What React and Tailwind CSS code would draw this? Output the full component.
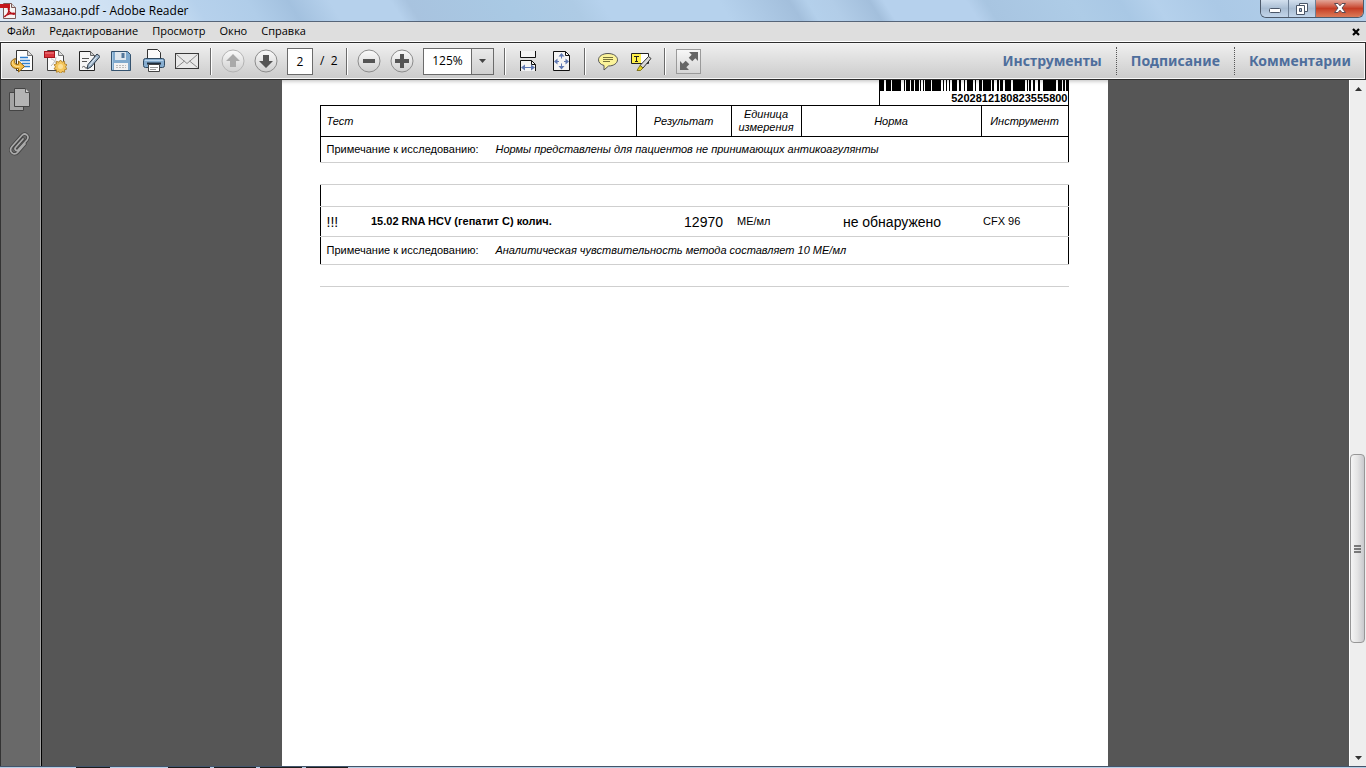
import React, { useState } from 'react';

const menuItems = ['Файл', 'Редактирование', 'Просмотр', 'Окно', 'Справка'];
const panels = ['Инструменты', 'Подписание', 'Комментарии'];

// [x, width] of every black bar
const bars = [
    [0, 4], [6, 5], [12, 9], [24, 1], [26, 4], [31, 3], [35, 4], [40, 1], [43, 1], [45, 6], [52, 9], [63, 1],
    [66, 1], [69, 1], [72, 5], [79, 2], [84, 1], [87, 6], [95, 1], [99, 3], [103, 8], [112, 2], [117, 2],
    [120, 3], [125, 6], [133, 12], [147, 1], [149, 2], [153, 2], [158, 2], [163, 13], [178, 4], [183, 2], [186, 3],
];

const PdfLogo = () => (
    <svg width="16" height="16" viewBox="0 0 16 16" aria-hidden="true">
        <path d="M3.5.5h8l4 4v11h-12z" fill="#f6f3f2" stroke="#7d5a58" />
        <path d="M11.500.500v4h4" fill="#ddd" stroke="#7d5a58" />
        <path d="M0 1h10v4H0z" fill="#c4161c" />
        <path d="M5 13.500c2-1.500 4-5 4.200-7.500 0-1-1-1-.9 0 .3 3 3 5.200 5.700 5.200 1 0 .8-1-.2-1-3 0-6 1-8 2.300-1 .7-1.500 1.300-.8 1z" fill="none" stroke="#b5121b" strokeWidth="1.400" />
    </svg>
);

const OpenIcon = () => (
    <svg width="24" height="24" viewBox="0 0 24 24" aria-hidden="true">
        <path d="M6.500 1.500h11l5 5v15h-16z" fill="#fdfdfd" stroke="#333" />
        <path d="M17.500 1.500v5h5" fill="#d8d8d8" stroke="#777" />
        <path d="M10 8.500h8M10 11.500h10M12 14.500h8M14 17.500h6" stroke="#2f7fd0" strokeWidth="1.500" />
        <path d="M5.500 9.500C2 10.500.500 13 1 15.500c.6 3 4 4.500 7.500 4V23l6-5.500-6-5.500v3.300c-2.200.3-3.600-.4-3.800-1.800-.2-1.300.3-2.700.8-4z" fill="#f5bf4a" stroke="#8f5f0c" />
        <path d="M2.500 12.500c-.5 3 2 5.500 7 5" fill="none" stroke="#fde3a2" />
    </svg>
);

const CreatePdfIcon = () => (
    <svg width="24" height="24" viewBox="0 0 24 24" aria-hidden="true">
        <path d="M4.500 1.500h11l5 5v15h-16z" fill="#fafafa" stroke="#444" />
        <path d="M15.500 1.500v5h5" fill="#ddd" stroke="#777" />
        <path d="M8 10c2 0 5 3 6 6M13 8c0 3-2 6-5 9" fill="none" stroke="#bbb" />
        <rect x="1.500" y="2.500" width="10" height="6" fill="#d9363e" stroke="#a3151d" />
        <path d="M2 4h9" stroke="#f08a8e" />
        <path d="M17.500 11l1.600 2.100 2.500-.8v2.600l2.400.8-1.500 2.100 1.500 2.100-2.400.8v2.500l-2.500-.7-1.600 2.100-1.600-2.100-2.500.7v-2.500l-2.400-.8 1.500-2.100-1.500-2.100 2.400-.8v-2.600l2.500.8z" fill="#f5c65c" stroke="#a8761c" strokeWidth=".8" />
        <circle cx="17.500" cy="17.500" r="2.500" fill="#fbe09b" />
    </svg>
);

const SignIcon = () => (
    <svg width="24" height="24" viewBox="0 0 24 24" aria-hidden="true">
        <path d="M3.500 2.500h11l4 4v15h-15z" fill="#f6f6f6" stroke="#222" />
        <path d="M14.500 2.500v4h4" fill="#ccc" stroke="#666" />
        <path d="M6 9.500h7M6 12.500h5M6 18.500c2-2 3-1 3 0s2 0 4-.5" fill="none" stroke="#555" />
        <path d="M21 5l3 2.500-9 10.500-4 2 1-4.500z" fill="#9fb6cc" stroke="#2c3a48" />
        <path d="M20.500 8l-7 8.500" stroke="#e9f1f8" />
    </svg>
);

const SaveIcon = () => (
    <svg width="24" height="24" viewBox="0 0 24 24" aria-hidden="true">
        <path d="M2.500 2.500h16l3 3v16h-19z" fill="#7fa9cd" stroke="#35536f" />
        <path d="M6 3h11v8H6z" fill="#dfe7ee" />
        <path d="M12.500 4h3v5h-3z" fill="#54779a" />
        <path d="M5 14h14v7H5z" fill="#f2f2f2" />
        <path d="M7 16.500h10M7 18.500h10" stroke="#bbb" strokeDasharray="2 1" />
        <path d="M3.500 3.500v17" stroke="#a9cbe6" />
    </svg>
);

const PrintIcon = () => (
    <svg width="24" height="24" viewBox="0 0 24 24" aria-hidden="true">
        <path d="M5.500 10V.500h10l3 3V10z" fill="#fafafa" stroke="#333" />
        <rect x="1.500" y="9.500" width="21" height="9" rx="2" fill="#86add0" stroke="#2f4961" />
        <path d="M3 11.500h18" stroke="#b8d3ea" />
        <path d="M5 14.500h14" stroke="#1d2d3d" strokeWidth="2" />
        <path d="M6.500 15.500h11v7h-11z" fill="#fff" stroke="#444" />
        <path d="M8 18.500h8M8 20.500h6" stroke="#999" />
    </svg>
);

const MailIcon = () => (
    <svg width="24" height="24" viewBox="0 0 24 24" aria-hidden="true">
        <rect x=".5" y="4.500" width="23" height="15" fill="#e9e9e9" stroke="#3a3a3a" />
        <path d="M1.500 5.500L12 14.500l10.500-9M1.500 18.500l8-6.500M22.500 18.500l-8-6.500" fill="none" stroke="#8a8a8a" />
    </svg>
);

const CircleIcon = ({ children, dim }) => (
    <svg width="24" height="24" viewBox="0 0 24 24" aria-hidden="true">
        <defs>
            <linearGradient id="disc" x1="0" y1="0" x2="0" y2="1">
                <stop offset="0" stopColor="#fbfbfb" />
                <stop offset="1" stopColor="#cfcfcf" />
            </linearGradient>
        </defs>
        <circle cx="12" cy="12" r="11" fill="url(#disc)" stroke={dim ? '#b4b4b4' : '#8c8c8c'} />
        <g fill={dim ? '#a9a9a9' : '#555'}>{children}</g>
    </svg>
);

const FitWidthIcon = () => (
    <svg width="24" height="24" viewBox="0 0 24 24" aria-hidden="true">
        <path d="M4.500 2v6.500h15V2" fill="#f4f4f4" stroke="#111" />
        <path d="M4.500 22V11.500h11l4 4V22" fill="#f4f4f4" stroke="#111" />
        <path d="M15.500 11.500v4h4" fill="none" stroke="#111" />
        <path d="M6 18.500h12" stroke="#6079b3" />
        <path d="M9 15.500v6l-4-3zM15 15.500v6l4-3z" fill="#6079b3" />
    </svg>
);

const FitPageIcon = () => (
    <svg width="24" height="24" viewBox="0 0 24 24" aria-hidden="true">
        <path d="M4.500 2.500h12l4 4v15h-16z" fill="#f4f4f4" stroke="#111" />
        <path d="M16.500 2.500v4h4" fill="none" stroke="#111" />
        <path d="M12.500 5v4.500M12.500 14.500V19M6 12.500h4M15 12.500h4" stroke="#6079b3" />
        <path d="M9.500 7.500h6l-3-3.500zM9.500 17h6l-3 3.500zM8.500 9.500v6L5 12.500zM16.500 9.500v6l3.500-3z" fill="#6079b3" />
    </svg>
);

const CommentIcon = () => (
    <svg width="24" height="24" viewBox="0 0 24 24" aria-hidden="true">
        <path d="M12 4.500c5.500 0 9.500 2.800 9.500 6.300S17.500 17 12.500 17L8 21v-4.500c-3.500-1-5.500-3-5.500-5.700 0-3.500 4-6.300 9.500-6.300z" fill="#fbf39a" stroke="#555" />
        <path d="M7 8.500h10M7 10.500h10M7 12.500h7" stroke="#77733d" />
    </svg>
);

const HighlightIcon = () => (
    <svg width="24" height="24" viewBox="0 0 24 24" aria-hidden="true">
        <path d="M2.500 4.500h17v10h-17z" fill="#fff" stroke="#222" />
        <path d="M3 5h9v9H3z" fill="#fff04a" />
        <path d="M5 7.500h5M7.500 7v6M6 12.500h3" stroke="#222" />
        <path d="M19.500 7.500l2.500 2-8 9.500-3-2.500z" fill="#d8d8d8" stroke="#333" />
        <path d="M11 16.500l3 2.500-2.500 2.500H8z" fill="#e7d21e" stroke="#6b600a" strokeWidth=".8" />
    </svg>
);

const ExpandIcon = () => (
    <svg width="22" height="22" viewBox="0 0 22 22" aria-hidden="true">
        <path d="M11 2h9v9l-2.700-2.700-3 3-3.600-3.600 3-3zM11 20H2v-9l2.700 2.700 3-3 3.600 3.600-3 3z" fill="#666" />
    </svg>
);

const PagesIcon = () => (
    <svg width="22" height="24" viewBox="0 0 22 24" aria-hidden="true">
        <path d="M.5 4.500h14v18H.5z" fill="#a5a5a5" stroke="#444" />
        <path d="M5.500.500h11l4 4v14h-15z" fill="#b4b4b4" stroke="#444" />
        <path d="M16.500.500v4h4" fill="#d0d0d0" stroke="#555" />
    </svg>
);

const ClipIcon = () => (
    <svg width="22" height="24" viewBox="0 0 22 24" aria-hidden="true">
        <g fill="none" strokeLinecap="round">
            <path d="M14 7L6.500 15.500c-1.500 2 1 4 2.700 2.300L18 8c3-4-2-8-5.200-4.500L3 14.500c-4 5 2 10 6 5.500l7-8" stroke="#444" strokeWidth="3.400" />
            <path d="M14 7L6.500 15.500c-1.500 2 1 4 2.700 2.300L18 8c3-4-2-8-5.200-4.500L3 14.500c-4 5 2 10 6 5.500l7-8" stroke="#aaa" strokeWidth="1.700" />
        </g>
    </svg>
);

const ToolButton = ({ label, children }) => (
    <button type="button" aria-label={label} className="h-6 w-[33px] shrink-0 pl-1">
        {children}
    </button>
);

const Separator = ({ className }) => (
    <div className={`h-[27px] w-[2px] shrink-0 border-l border-[#6b6b6b] bg-white ${className}`} />
);

const TitleBar = () => (
    <header className="flex h-[22px] shrink-0 items-start justify-between border-b border-[#566579] bg-[linear-gradient(58deg,#dfeaf6_0px,#cfe1f3_100px,#c4dbf1_150px,#b6d1ec_175px,#b0cde9_220px,#a3c1df_255px,#b6d1ec_290px,#b6d1ec_342px,#a8c3df_356px,#a9c9e4_440px,#aecbe5_495px,#b6d2ed_520px,#b6d2ed_620px,#a3bfdc_680px,#b4d0eb_695px,#b2cde8_715px,#a3bfdc_748px,#b6d1ed_760px,#b6d1ed_830px,#a8c5e1_846px,#aecce7_920px,#a9c8e5_960px,#b5d1ec_990px,#abc9e6_1040px,#b7d2ec_1200px)]">
        <div className="flex h-[21px] items-center gap-[5px]">
            <PdfLogo />
            <h1 className="text-xs">Замазано.pdf - Adobe Reader</h1>
        </div>
        <div className="mr-[2px] flex h-[18px] overflow-hidden rounded-b-md border border-t-0 border-[#4d5a6b]">
            <button type="button" aria-label="Свернуть" className="flex w-7 items-center justify-center border-r border-[#6d7f95] bg-linear-to-b from-[#d3e0ee] via-[#a9bdd3] to-[#c2d5ea] pt-1">
                <svg width="12" height="5" viewBox="0 0 12 5" aria-hidden="true">
                    <rect x=".5" y=".5" width="11" height="4" rx="1" fill="#fff" stroke="#4a5668" />
                </svg>
            </button>
            <button type="button" aria-label="Восстановить" className="flex w-[27px] items-center justify-center border-r border-[#6d7f95] bg-linear-to-b from-[#d3e0ee] via-[#a9bdd3] to-[#c2d5ea]">
                <svg width="12" height="12" viewBox="0 0 12 12" aria-hidden="true">
                    <path d="M3.500.500h8v8h-8z" fill="#fff" stroke="#4a5668" />
                    <path d="M.5 2.500h8v9h-8z" fill="#fff" stroke="#4a5668" />
                    <path d="M3.500 5.500h2v3h-2z" fill="#a9bdd3" stroke="#4a5668" />
                </svg>
            </button>
            <button type="button" aria-label="Закрыть" className="flex w-[47px] items-center justify-center bg-linear-to-b from-[#e2a598] via-[#c53d25] to-[#dc7a57] pb-[2px]">
                <svg width="12" height="10" viewBox="0 0 12 10" aria-hidden="true">
                    <path d="M.5.500h3.500L6 2.800 8 .500h3.500L8 5l3.500 4.500H8L6 7.200 4 9.500H.500L4 5z" fill="#fff" stroke="#5a4a52" />
                </svg>
            </button>
        </div>
    </header>
);

const MenuBar = () => (
    <nav className="flex h-5 shrink-0 items-center justify-between border-b border-white bg-[#dedede] pr-[6px] pl-[7px]">
        <div className="flex items-center gap-[14px]">
            {menuItems.map(item => (
                <button key={item} type="button" className="text-[11px]">{item}</button>
            ))}
        </div>
        <button type="button" aria-label="Закрыть документ">
            <svg width="8" height="8" viewBox="0 0 8 8" aria-hidden="true">
                <path d="M1 1l6 6M7 1L1 7" stroke="#000" strokeWidth="2.200" />
            </svg>
        </button>
    </nav>
);

const ToolBar = () => {
    const [page, setPage] = useState('2');
    const [zoom, setZoom] = useState('125%');

    return (
        <div className="flex h-[38px] shrink-0 items-center border border-[#2d2d2d] bg-linear-to-b from-[#f0f0f0] to-[#cbcbcb] pl-[5px] shadow-[inset_0_0_0_1px_#f6f6f6]">
            <ToolButton label="Открыть"><OpenIcon /></ToolButton>
            <ToolButton label="Создать PDF"><CreatePdfIcon /></ToolButton>
            <ToolButton label="Подписать"><SignIcon /></ToolButton>
            <ToolButton label="Сохранить"><SaveIcon /></ToolButton>
            <ToolButton label="Печать"><PrintIcon /></ToolButton>
            <ToolButton label="Отправить"><MailIcon /></ToolButton>
            <Separator className="mr-[5px] ml-[6px]" />
            <ToolButton label="Предыдущая страница">
                <CircleIcon dim><path d="M12 5l7 7h-4v6H9v-6H5z" /></CircleIcon>
            </ToolButton>
            <ToolButton label="Следующая страница">
                <CircleIcon><path d="M12 19l7-7h-4V6H9v6H5z" /></CircleIcon>
            </ToolButton>
            <input
                aria-label="Номер страницы"
                value={page}
                onChange={e => setPage(e.target.value)}
                className="ml-1 h-[27px] w-[26px] shrink-0 border border-[#6b6b6b] bg-white text-center text-xs"
            />
            <span className="w-[33px] shrink-0 pl-[7px] text-xs whitespace-pre">/  2</span>
            <Separator className="mr-[5px]" />
            <ToolButton label="Уменьшить">
                <CircleIcon><path d="M6 10h12v4H6z" /></CircleIcon>
            </ToolButton>
            <ToolButton label="Увеличить">
                <CircleIcon><path d="M10 5h4v5h5v4h-5v5h-4v-5H5v-4h5z" /></CircleIcon>
            </ToolButton>
            <div className="ml-1 flex h-[27px] w-[71px] shrink-0 border border-[#6b6b6b]">
                <input
                    aria-label="Масштаб"
                    value={zoom}
                    onChange={e => setZoom(e.target.value)}
                    className="w-[47px] bg-white text-center text-xs"
                />
                <button type="button" aria-label="Выбрать масштаб" className="flex flex-1 items-center justify-center border-l border-[#6b6b6b]">
                    <svg width="7" height="4" viewBox="0 0 7 4" aria-hidden="true"><path d="M0 0h7L3.500 4z" fill="#444" /></svg>
                </button>
            </div>
            <Separator className="mr-[6px] ml-[10px]" />
            <ToolButton label="По ширине"><FitWidthIcon /></ToolButton>
            <ToolButton label="Страница целиком"><FitPageIcon /></ToolButton>
            <Separator className="mr-[6px] ml-[6px]" />
            <ToolButton label="Комментарий"><CommentIcon /></ToolButton>
            <ToolButton label="Выделить текст"><HighlightIcon /></ToolButton>
            <Separator className="mr-[10px] ml-[6px]" />
            <button type="button" aria-label="Режим чтения" className="flex size-[25px] shrink-0 items-center justify-center border border-[#9a9a9a] bg-linear-to-b from-[#f7f7f7] to-[#d5d5d5]">
                <ExpandIcon />
            </button>
            <div className="ml-auto flex divide-x divide-dotted divide-[#555]">
                {panels.map(panel => (
                    <button key={panel} type="button" className="h-7 px-[14px] font-['Noto_Sans',sans-serif] text-sm font-bold text-[#4e6e9c]">{panel}</button>
                ))}
            </div>
        </div>
    );
};

const ResultHeader = () => (
    <table className="w-full table-fixed border-collapse text-[11px] leading-[13px]">
        <colgroup>
            <col className="w-[316px]" />
            <col className="w-[95px]" />
            <col className="w-[70px]" />
            <col className="w-[180px]" />
            <col className="w-[87px]" />
        </colgroup>
        <thead>
            <tr className="h-[31px] italic">
                <th className="border border-black pl-[6px] text-left font-normal">Тест</th>
                <th className="border border-black font-normal">Результат</th>
                <th className="border border-black font-normal">Единица измерения</th>
                <th className="border border-black font-normal">Норма</th>
                <th className="border border-black font-normal">Инструмент</th>
            </tr>
        </thead>
        <tbody>
            <tr className="h-[26px]">
                <td colSpan={5} className="border-x border-b border-x-black border-b-[#cfcfcf] pl-[6px]">
                    Примечание к исследованию:
                    <i className="ml-[17px]">Нормы представлены для пациентов не принимающих антикоагулянты</i>
                </td>
            </tr>
        </tbody>
    </table>
);

const ResultTable = () => (
    <table className="mt-[21px] w-full table-fixed border-collapse border-x border-black text-[11px] leading-[13px]">
        <colgroup>
            <col className="w-[45px]" />
            <col className="w-[271px]" />
            <col className="w-[95px]" />
            <col className="w-[70px]" />
            <col className="w-[180px]" />
            <col className="w-[87px]" />
        </colgroup>
        <tbody>
            <tr className="h-[22px] border-y border-[#cfcfcf]">
                <td colSpan={6} />
            </tr>
            <tr className="h-[30px] border-b border-[#cfcfcf]">
                <td className="pl-[6px] text-sm">!!!</td>
                <td className="pl-[6px] font-bold">15.02 RNA HCV (гепатит С) колич.</td>
                <td className="pr-[8px] text-right text-sm">12970</td>
                <td className="pl-[6px]">МЕ/мл</td>
                <td className="pl-[2px] text-center text-sm">не обнаружено</td>
                <td className="pl-[2px]">CFX 96</td>
            </tr>
            <tr className="h-[28px] border-b border-[#cfcfcf]">
                <td colSpan={6} className="pl-[6px]">
                    Примечание к исследованию:
                    <i className="ml-[17px]">Аналитическая чувствительность метода составляет 10 МЕ/мл</i>
                </td>
            </tr>
        </tbody>
    </table>
);

const DocumentPage = () => (
    <article className="w-[826px] max-w-full bg-white pr-[39px] pl-[38px] font-['Liberation_Sans',Arial,sans-serif] text-black shadow-[inset_0_5px_4px_-4px_#bbb]">
        <div className="flex justify-end">
            <figure className="h-[25px] w-[190px] border-x border-black">
                <svg width="189" height="11" viewBox="0 0 189 11" aria-hidden="true">
                    {bars.map(([x, width]) => (
                        <rect key={x} x={x} y="0" width={width} height="11" />
                    ))}
                </svg>
                <figcaption className="text-right text-[11px] leading-[14px] font-bold">5202812180823555800</figcaption>
            </figure>
        </div>
        <ResultHeader />
        <ResultTable />
        <hr className="mt-[21px] border-[#cfcfcf]" />
    </article>
);

const ScrollBar = () => (
    <div className="flex w-[17px] shrink-0 flex-col border-l border-white bg-[#eeeeee]">
        <button type="button" aria-label="Вверх" className="flex h-[17px] items-center justify-center">
            <svg width="7" height="4" viewBox="0 0 7 4" aria-hidden="true"><path d="M0 4h7L3.500 0z" fill="#333" /></svg>
        </button>
        <div className="flex-[358]" />
        <button type="button" aria-label="Полоса прокрутки" className="mr-px flex flex-[187] items-center justify-center rounded-sm border border-[#979797] bg-linear-to-r from-[#f5f5f5] via-[#e4e4e4] to-[#c9c9cd]">
            <svg width="7" height="8" viewBox="0 0 7 8" aria-hidden="true"><path d="M0 1h7M0 4h7M0 7h7" stroke="#555" strokeWidth="1.500" /></svg>
        </button>
        <div className="flex-[106]" />
        <button type="button" aria-label="Вниз" className="flex h-[17px] items-center justify-center">
            <svg width="7" height="4" viewBox="0 0 7 4" aria-hidden="true"><path d="M0 0h7L3.500 4z" fill="#333" /></svg>
        </button>
    </div>
);

// top edge of the system taskbar with its window buttons
const TaskbarEdge = () => (
    <footer className="flex h-[2px] shrink-0 gap-1 border-t border-[#43546a] bg-[#b5cde4] pl-[76px]">
        <div className="mr-[54px] w-[34px] bg-[#1c1c1c]" />
        <div className="w-[42px] bg-[#1c1c1c]" />
        <div className="w-[42px] bg-[#1c1c1c]" />
        <div className="w-[42px] bg-[#1c1c1c]" />
        <div className="w-[42px] bg-[#1c1c1c]" />
    </footer>
);

const App = () => {
    return (
        <div className="flex h-screen flex-col overflow-hidden bg-[#565656] font-['Open_Sans',sans-serif] text-black">
            <TitleBar />
            <MenuBar />
            <ToolBar />
            <div className="flex min-h-0 flex-1">
                <aside className="flex w-[42px] shrink-0 flex-col items-center gap-5 border-r border-l border-r-black border-l-[#333] bg-[#696969] pt-2 pr-[2px] shadow-[inset_-1px_0_0_#a3a3a3]">
                    <button type="button" aria-label="Миниатюры страниц"><PagesIcon /></button>
                    <button type="button" aria-label="Вложения"><ClipIcon /></button>
                </aside>
                <main className="flex min-w-0 flex-1 justify-center pr-[2px]">
                    <DocumentPage />
                </main>
                <ScrollBar />
            </div>
            <TaskbarEdge />
        </div>
    );
};

export default App;
